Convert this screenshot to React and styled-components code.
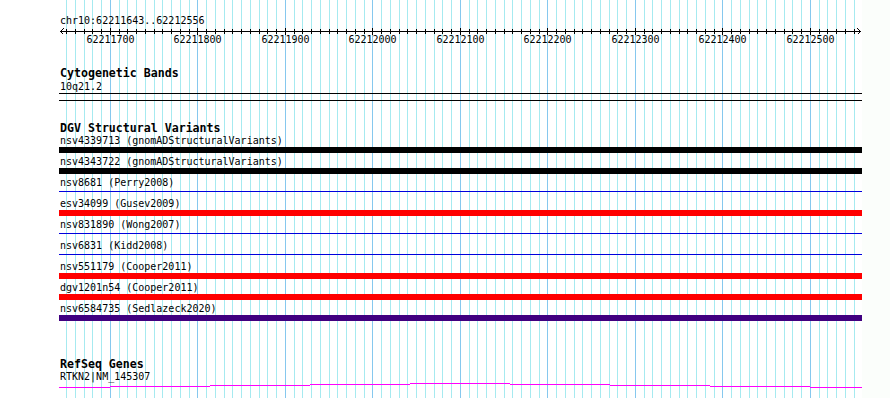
import React from "react";
import styled, { createGlobalStyle } from "styled-components";

const START = 62211643;
const END = 62212556;
const BP_PX = 0.875;
const MONO = '"DejaVu Sans Mono", "Liberation Mono", monospace';

// panel-local x for a base position
const xOf = (bp) => Math.round(1 + (bp - START) * BP_PX) + 0.5;

const gridPositions = [];
for (let bp = Math.ceil(START / 10) * 10; bp <= END; bp += 10) gridPositions.push(bp);

const variants = [
  { name: "nsv4339713", study: "gnomADStructuralVariants", kind: "bar", color: "#000000" },
  { name: "nsv4343722", study: "gnomADStructuralVariants", kind: "bar", color: "#000000" },
  { name: "nsv8681", study: "Perry2008", kind: "line", color: "#0000dd" },
  { name: "esv34099", study: "Gusev2009", kind: "bar", color: "#ff0000" },
  { name: "nsv831890", study: "Wong2007", kind: "line", color: "#0000dd" },
  { name: "nsv6831", study: "Kidd2008", kind: "line", color: "#0000dd" },
  { name: "nsv551179", study: "Cooper2011", kind: "bar", color: "#ff0000" },
  { name: "dgv1201n54", study: "Cooper2011", kind: "bar", color: "#ff0000" },
  { name: "nsv6584735", study: "Sedlazeck2020", kind: "bar", color: "#400080" },
];

// intron line of the gene, a shallow hat across the view
const geneSteps = [
  [0, 51, 4],
  [51, 151, 3],
  [151, 251, 2],
  [251, 351, 1],
  [351, 451, 0],
  [451, 551, 1],
  [551, 651, 2],
  [651, 751, 3],
  [751, 803, 4],
];

const GlobalStyle = createGlobalStyle`
  html, body {
    margin: 0;
    padding: 0;
    background: #ffffff;
  }
  body {
    width: 890px;
    height: 398px;
    overflow: hidden;
    font-family: ${MONO};
    color: #000;
  }
`;

const Page = styled.div`
  display: flex;
  width: 890px;
  height: 398px;
`;

const Gutter = styled.div`
  flex: none;
  width: ${(p) => p.width}px;
  background: ${(p) => p.bg};
`;

const Panel = styled.div`
  position: relative;
  flex: none;
  width: 803px;
  height: 398px;
  overflow: hidden;
`;

const GridLayer = styled.svg`
  position: absolute;
  top: 0;
  left: 0;
  z-index: 0;
  pointer-events: none;
`;

const Tracks = styled.div`
  position: relative;
  z-index: 1;
  display: flex;
  flex-direction: column;
`;

const ChrLabel = styled.div`
  margin-top: 15px;
  padding-left: 1px;
  font-size: 10px;
  line-height: 12px;
  white-space: pre;
`;

const RulerSvg = styled.svg`
  display: block;
  flex: none;
  margin-top: 1px;
`;

const TrackTitle = styled.div`
  margin-top: ${(p) => p.gap}px;
  padding-left: 1px;
  font-size: 11.6px;
  font-weight: bold;
  line-height: 13px;
  white-space: pre;
`;

const FeatureLabel = styled.div`
  padding-left: 1px;
  font-size: 10px;
  line-height: ${(p) => p.lh || 12}px;
  white-space: pre;
`;

const BandBox = styled.div`
  box-sizing: border-box;
  height: 8px;
  border-top: 1px solid #000;
  border-bottom: 1px solid #000;
`;

const VariantRow = styled.div`
  display: flex;
  flex-direction: column;
`;

const BarSlot = styled.div`
  height: 9px;
  display: flex;
  flex-direction: column;
  justify-content: flex-start;
`;

const Bar = styled.div`
  height: ${(p) => (p.kind === "bar" ? 6 : 1)}px;
  margin-top: ${(p) => (p.kind === "bar" ? 0 : 2)}px;
  background: ${(p) => p.color};
`;

const GeneSvg = styled.svg`
  display: block;
`;

const Grid = () => (
  <GridLayer width="803" height="398" shapeRendering="crispEdges">
    {gridPositions.map((bp) => (
      <line
        key={bp}
        x1={xOf(bp)}
        x2={xOf(bp)}
        y1="0"
        y2="398"
        stroke={bp % 100 === 0 ? "#86c8ee" : "#a6eaf0"}
        strokeWidth="1"
      />
    ))}
  </GridLayer>
);

const Ruler = () => (
  <RulerSvg width="803" height="22" shapeRendering="crispEdges">
    <line x1="1" x2="802" y1="3.5" y2="3.5" stroke="#000" />
    <polyline points="4.5,0.5 1.5,3.5 4.5,6.5" fill="none" stroke="#000" />
    <polyline points="798.5,0.5 801.5,3.5 798.5,6.5" fill="none" stroke="#000" />
    {gridPositions.map((bp) => {
      const major = bp % 100 === 0;
      return (
        <line
          key={bp}
          x1={xOf(bp)}
          x2={xOf(bp)}
          y1={major ? 0 : 1}
          y2={major ? 7 : 6}
          stroke="#000"
        />
      );
    })}
    {gridPositions
      .filter((bp) => bp % 100 === 0)
      .map((bp) => (
        <text
          key={bp}
          x={xOf(bp)}
          y="15"
          textAnchor="middle"
          fontFamily={MONO}
          fontSize="10"
          fill="#000"
        >
          {bp}
        </text>
      ))}
  </RulerSvg>
);

const GeneModel = () => (
  <GeneSvg width="803" height="15" shapeRendering="crispEdges">
    {geneSteps.map(([a, b, y]) => (
      <line key={a} x1={a} x2={b} y1={y + 0.5} y2={y + 0.5} stroke="#ff00ff" />
    ))}
  </GeneSvg>
);

export default function App() {
  return (
    <>
      <GlobalStyle />
      <Page>
        <Gutter width={59} bg="#ffffff" />
        <Panel>
          <Grid />
          <Tracks>
            <ChrLabel>chr10:62211643..62212556</ChrLabel>
            <Ruler />

            <TrackTitle gap={17}>Cytogenetic Bands</TrackTitle>
            <FeatureLabel lh={13}>10q21.2</FeatureLabel>
            <BandBox />

            <TrackTitle gap={21}>DGV Structural Variants</TrackTitle>
            {variants.map((v) => (
              <VariantRow key={v.name}>
                <FeatureLabel>{`${v.name} (${v.study})`}</FeatureLabel>
                <BarSlot>
                  <Bar kind={v.kind} color={v.color} />
                </BarSlot>
              </VariantRow>
            ))}

            <TrackTitle gap={34}>RefSeq Genes</TrackTitle>
            <FeatureLabel>RTKN2|NM_145307</FeatureLabel>
            <GeneModel />
          </Tracks>
        </Panel>
        <Gutter width={28} bg="#fbfefb" />
      </Page>
    </>
  );
}
